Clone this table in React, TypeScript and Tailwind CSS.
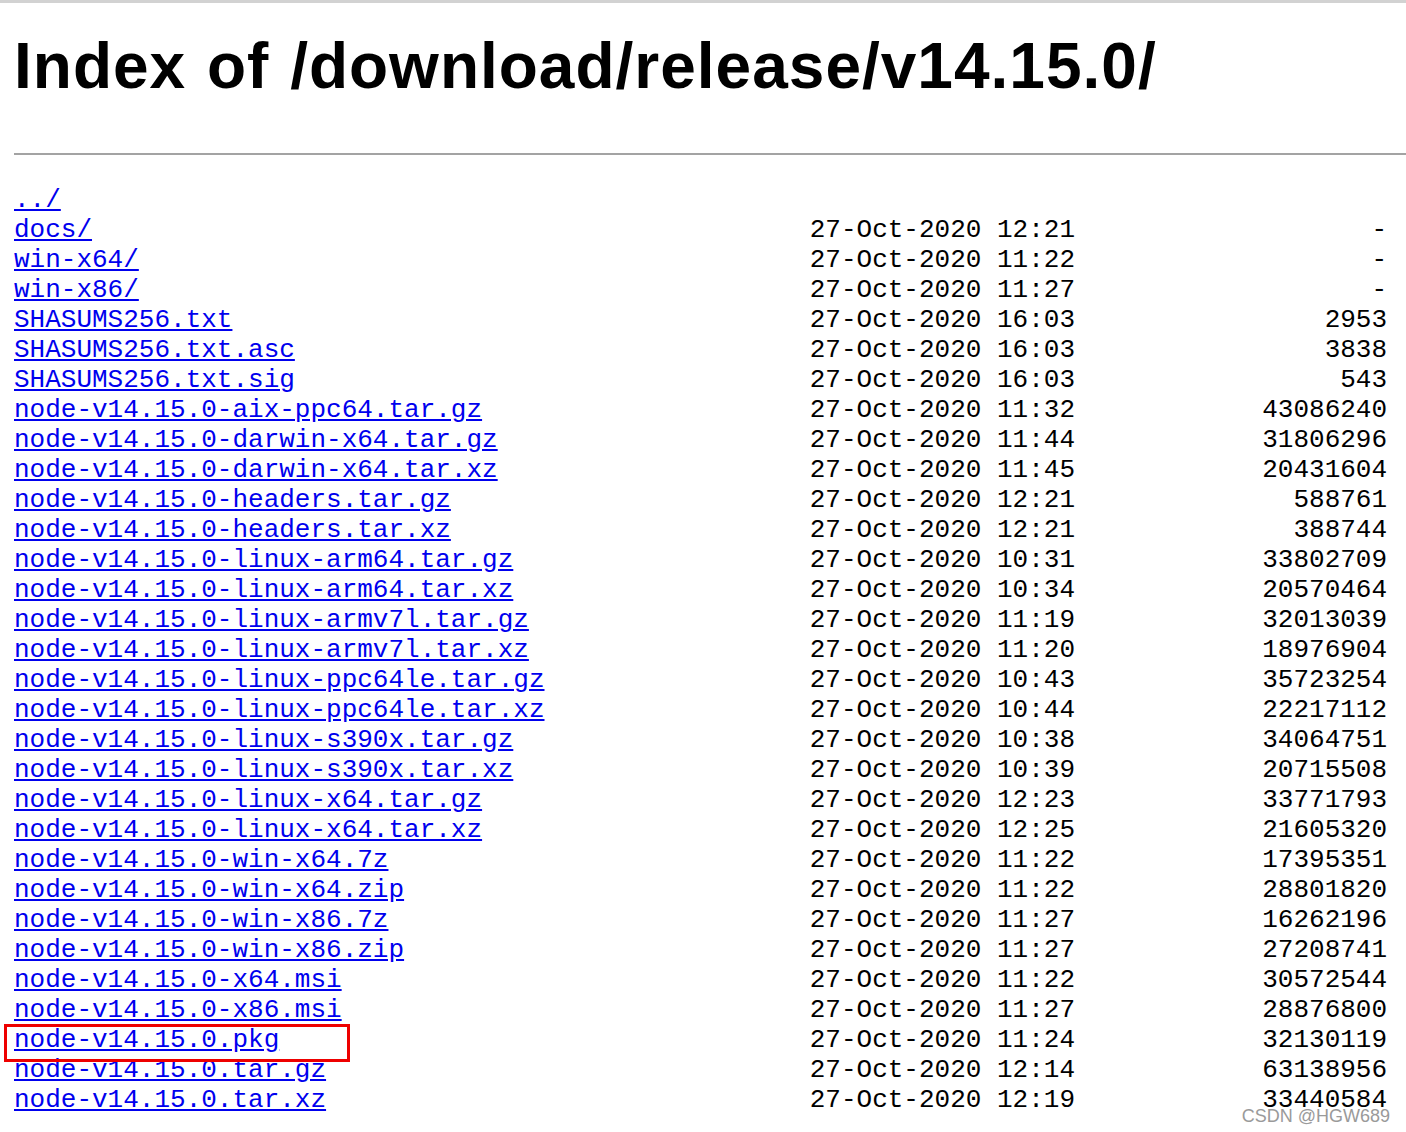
const files: [string, string, string][] = [
  ["docs/", "12:21", "-"],
  ["win-x64/", "11:22", "-"],
  ["win-x86/", "11:27", "-"],
  ["SHASUMS256.txt", "16:03", "2953"],
  ["SHASUMS256.txt.asc", "16:03", "3838"],
  ["SHASUMS256.txt.sig", "16:03", "543"],
  ["node-v14.15.0-aix-ppc64.tar.gz", "11:32", "43086240"],
  ["node-v14.15.0-darwin-x64.tar.gz", "11:44", "31806296"],
  ["node-v14.15.0-darwin-x64.tar.xz", "11:45", "20431604"],
  ["node-v14.15.0-headers.tar.gz", "12:21", "588761"],
  ["node-v14.15.0-headers.tar.xz", "12:21", "388744"],
  ["node-v14.15.0-linux-arm64.tar.gz", "10:31", "33802709"],
  ["node-v14.15.0-linux-arm64.tar.xz", "10:34", "20570464"],
  ["node-v14.15.0-linux-armv7l.tar.gz", "11:19", "32013039"],
  ["node-v14.15.0-linux-armv7l.tar.xz", "11:20", "18976904"],
  ["node-v14.15.0-linux-ppc64le.tar.gz", "10:43", "35723254"],
  ["node-v14.15.0-linux-ppc64le.tar.xz", "10:44", "22217112"],
  ["node-v14.15.0-linux-s390x.tar.gz", "10:38", "34064751"],
  ["node-v14.15.0-linux-s390x.tar.xz", "10:39", "20715508"],
  ["node-v14.15.0-linux-x64.tar.gz", "12:23", "33771793"],
  ["node-v14.15.0-linux-x64.tar.xz", "12:25", "21605320"],
  ["node-v14.15.0-win-x64.7z", "11:22", "17395351"],
  ["node-v14.15.0-win-x64.zip", "11:22", "28801820"],
  ["node-v14.15.0-win-x86.7z", "11:27", "16262196"],
  ["node-v14.15.0-win-x86.zip", "11:27", "27208741"],
  ["node-v14.15.0-x64.msi", "11:22", "30572544"],
  ["node-v14.15.0-x86.msi", "11:27", "28876800"],
  ["node-v14.15.0.pkg", "11:24", "32130119"],
  ["node-v14.15.0.tar.gz", "12:14", "63138956"],
  ["node-v14.15.0.tar.xz", "12:19", "33440584"],
];

export default function App() {
  return (
    <div className="relative h-[1132px] w-[1406px] overflow-hidden bg-white">
      <div className="h-[3px] bg-[#d2d2d2]" />
      <h1 className="ml-[14px] mt-[31px] whitespace-nowrap text-[64px] font-bold leading-none tracking-[1px] text-black [word-spacing:2px] [font-family:'Liberation_Sans',Arial,sans-serif]">
        Index of /download/release/v14.15.0/
      </h1>
      <div className="ml-[14px] mt-[55px] border-t-2 border-[#a3a3a3]" />
      <pre className="ml-[14px] mt-[30px] text-[26px] leading-[30px] text-black [font-family:'Liberation_Mono','Courier_New',monospace]">
        <a href="#" className="text-[#0000ee] underline">../</a>
        {"\n"}
        {files.map(([name, time, size]) => (
          <span key={name}>
            <a href="#" className="text-[#0000ee] underline">{name}</a>
            {" ".repeat(51 - name.length)}
            {`27-Oct-2020 ${time}`}
            {size.padStart(20)}
            {"\n"}
          </span>
        ))}
      </pre>
      {/* highlight box drawn over the .pkg row */}
      <div className="absolute left-[4px] top-[1024px] h-[38px] w-[346px] border-[3px] border-[#ee0000]" />
      <div className="absolute right-[16px] top-[1103px] text-[18px] text-[#9a9a9a] [font-family:'Liberation_Sans',Arial,sans-serif] [text-shadow:0_0_1px_#fff]">
        CSDN @HGW689
      </div>
    </div>
  );
}
